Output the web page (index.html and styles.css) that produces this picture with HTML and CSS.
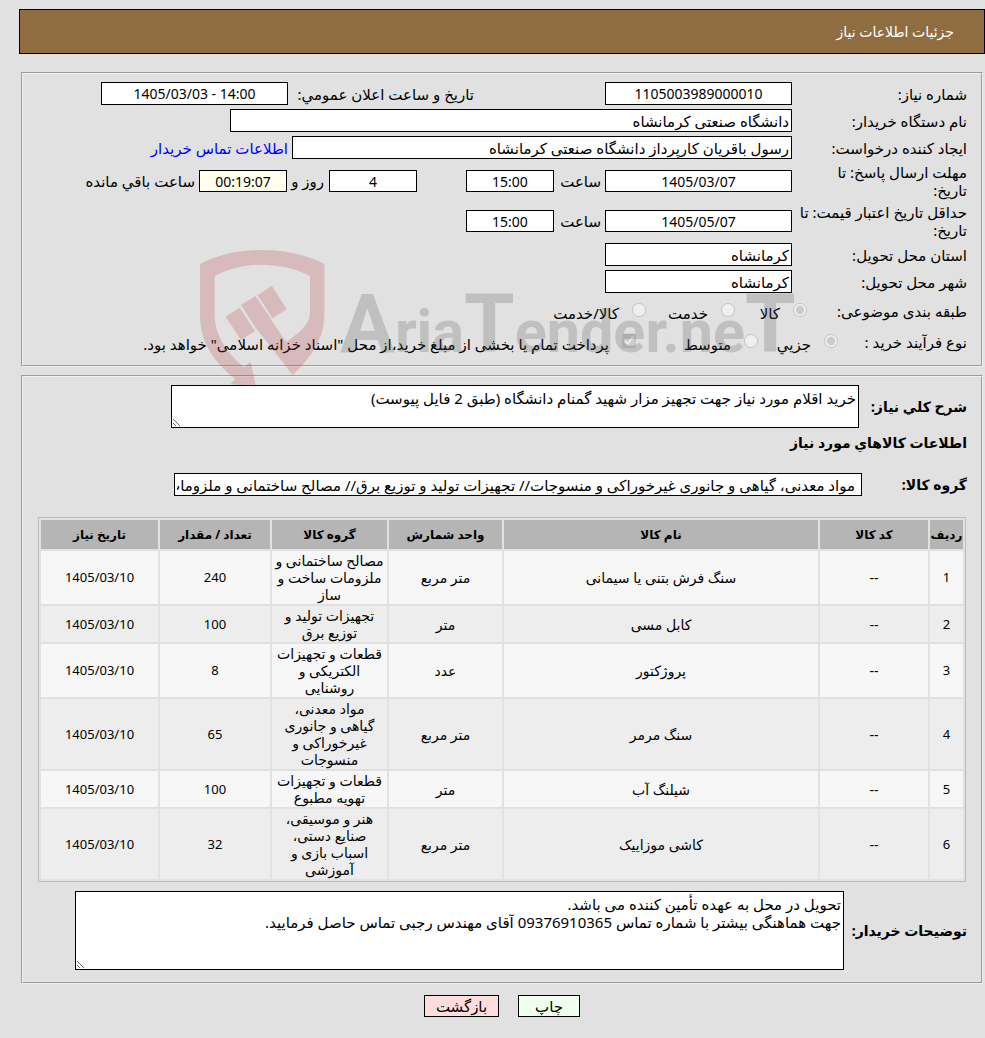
FILE: index.html
```html
<!DOCTYPE html>
<html lang="fa" dir="rtl">
<head>
    <meta charset="UTF-8">
    <meta name="viewport" content="width=device-width, initial-scale=1.0">
    <title>جزئیات اطلاعات نیاز</title>
    <link rel="stylesheet" href="styles.css">
</head>
<body>
    <div class="page">
        <h1 class="titleBar">جزئیات اطلاعات نیاز</h1>

        <fieldset class="box info">
            <div class="row">
                <label class="rowLabel" for="needNo">شماره نیاز:</label>
                <input class="field date" type="text" id="needNo" value="1105003989000010" readonly>
                <label class="announceLabel" for="announce">تاریخ و ساعت اعلان عمومي:</label>
                <input class="field date" type="text" id="announce" value="1405/03/03 - 14:00" dir="ltr" readonly>
            </div>
            <div class="row">
                <label class="rowLabel" for="buyer">نام دستگاه خریدار:</label>
                <input class="field buyer" type="text" id="buyer" value="دانشگاه صنعتی کرمانشاه" readonly>
            </div>
            <div class="row">
                <label class="rowLabel" for="creator">ایجاد کننده درخواست:</label>
                <input class="field creator" type="text" id="creator" value="رسول باقریان کارپرداز دانشگاه صنعتی کرمانشاه" readonly>
                <a class="contact" href="#contact">اطلاعات تماس خریدار</a>
            </div>
            <div class="row double">
                <label class="rowLabel" for="replyDate">مهلت ارسال پاسخ: تا<br>تاریخ:</label>
                <input class="field date" type="text" id="replyDate" value="1405/03/07" dir="ltr" readonly>
                <label class="hourLabel" for="replyHour">ساعت</label>
                <input class="field hour" type="text" id="replyHour" value="15:00" readonly>
                <input class="field hour days" type="text" id="daysLeft" value="4" readonly>
                <label class="daysLabel" for="daysLeft">روز و</label>
                <input class="field hour countdown" type="text" id="timeLeft" value="00:19:07" readonly>
                <label class="leftLabel" for="timeLeft">ساعت باقي مانده</label>
            </div>
            <div class="row double">
                <label class="rowLabel" for="priceDate">حداقل تاریخ اعتبار قیمت: تا<br>تاریخ:</label>
                <input class="field date" type="text" id="priceDate" value="1405/05/07" dir="ltr" readonly>
                <label class="hourLabel" for="priceHour">ساعت</label>
                <input class="field hour" type="text" id="priceHour" value="15:00" readonly>
            </div>
            <div class="row">
                <label class="rowLabel" for="province">استان محل تحویل:</label>
                <input class="field place" type="text" id="province" value="کرمانشاه" readonly>
            </div>
            <div class="row">
                <label class="rowLabel" for="city">شهر محل تحویل:</label>
                <input class="field place" type="text" id="city" value="کرمانشاه" readonly>
            </div>
            <div class="row choices">
                <span class="choiceTitle subject">طبقه بندی موضوعی:</span>
                <label class="choice goods"><input type="radio" name="subject" checked disabled>کالا</label>
                <label class="choice service"><input type="radio" name="subject" disabled>خدمت</label>
                <label class="choice"><input type="radio" name="subject" disabled>کالا/خدمت</label>
            </div>
            <div class="row choices">
                <span class="choiceTitle process">نوع فرآیند خرید :</span>
                <label class="choice small"><input type="radio" name="process" checked disabled>جزیي</label>
                <label class="choice medium"><input type="radio" name="process" disabled>متوسط</label>
                <label class="choice"><input type="checkbox" checked disabled>پرداخت تمام یا بخشی از مبلغ خرید،از محل "اسناد خزانه اسلامی" خواهد بود.</label>
            </div>
        </fieldset>

        <fieldset class="box goodsBox">
            <div class="row">
                <label class="boldLabel" for="desc">شرح کلي نیاز:</label>
                <textarea class="area desc" id="desc" readonly>خرید اقلام مورد نیاز جهت تجهیز مزار شهید گمنام دانشگاه (طبق 2 فایل پیوست)</textarea>
            </div>
            <h2 class="subTitle">اطلاعات کالاهاي مورد نیاز</h2>
            <div class="row">
                <label class="boldLabel groupLabel" for="group">گروه کالا:</label>
                <input class="field group" type="text" id="group" value="مواد معدنی، گیاهی و جانوری غیرخوراکی و منسوجات// تجهیزات تولید و توزیع برق// مصالح ساختمانی و ملزومات ساخت و ساز" readonly>
            </div>

            <table class="goodsTable">
                <colgroup>
                    <col class="colRow">
                    <col class="colCode">
                    <col>
                    <col class="colUnit">
                    <col class="colGroup">
                    <col class="colCount">
                    <col class="colDate">
                </colgroup>
                <thead>
                    <tr>
                        <th>ردیف</th>
                        <th>کد کالا</th>
                        <th>نام کالا</th>
                        <th>واحد شمارش</th>
                        <th>گروه کالا</th>
                        <th>تعداد / مقدار</th>
                        <th>تاریخ نیاز</th>
                    </tr>
                </thead>
                <tbody>
                    <tr>
                        <td class="num">1</td>
                        <td>--</td>
                        <td>سنگ فرش بتنی یا سیمانی</td>
                        <td>متر مربع</td>
                        <td>مصالح ساختمانی و<br>ملزومات ساخت و<br>ساز</td>
                        <td class="num">240</td>
                        <td class="num" dir="ltr">1405/03/10</td>
                    </tr>
                    <tr>
                        <td class="num">2</td>
                        <td>--</td>
                        <td>کابل مسی</td>
                        <td>متر</td>
                        <td>تجهیزات تولید و<br>توزیع برق</td>
                        <td class="num">100</td>
                        <td class="num" dir="ltr">1405/03/10</td>
                    </tr>
                    <tr>
                        <td class="num">3</td>
                        <td>--</td>
                        <td>پروژکتور</td>
                        <td>عدد</td>
                        <td>قطعات و تجهیزات<br>الکتریکی و<br>روشنایی</td>
                        <td class="num">8</td>
                        <td class="num" dir="ltr">1405/03/10</td>
                    </tr>
                    <tr>
                        <td class="num">4</td>
                        <td>--</td>
                        <td>سنگ مرمر</td>
                        <td>متر مربع</td>
                        <td>مواد معدنی،<br>گیاهی و جانوری<br>غیرخوراکی و<br>منسوجات</td>
                        <td class="num">65</td>
                        <td class="num" dir="ltr">1405/03/10</td>
                    </tr>
                    <tr>
                        <td class="num">5</td>
                        <td>--</td>
                        <td>شیلنگ آب</td>
                        <td>متر</td>
                        <td>قطعات و تجهیزات<br>تهویه مطبوع</td>
                        <td class="num">100</td>
                        <td class="num" dir="ltr">1405/03/10</td>
                    </tr>
                    <tr>
                        <td class="num">6</td>
                        <td>--</td>
                        <td>کاشی موزاییک</td>
                        <td>متر مربع</td>
                        <td>هنر و موسیقی،<br>صنایع دستی،<br>اسباب بازی و<br>آموزشی</td>
                        <td class="num">32</td>
                        <td class="num" dir="ltr">1405/03/10</td>
                    </tr>
                </tbody>
            </table>

            <div class="row">
                <label class="boldLabel notesLabel" for="notes">توضیحات خریدار:</label>
                <textarea class="area notes" id="notes" readonly>تحویل در محل به عهده تأمین کننده می باشد.
جهت هماهنگی بیشتر با شماره تماس 09376910365 آقای مهندس رجبی تماس حاصل فرمایید.</textarea>
            </div>
        </fieldset>

        <div class="buttons">
            <button class="btn print" type="button">چاپ</button>
            <button class="btn back" type="button">بازگشت</button>
        </div>

        <svg class="watermark" viewBox="270 60 1845 414" direction="ltr" aria-hidden="true">
            <g fill="#b8323a">
                <path d="M270 102Q350 60 456 60T643 102V255C643 330 600 385 548 435L440 296L454 282L442 268L484 270L528 336Q600 290 600 250V137Q530 104 456 104T314 137V255C314 320 355 372 402 412L422 395L438 470L362 462L375 446C310 395 270 335 270 255Z"/>
                <path d="M347 260L389 233L435 303L393 330Z"/>
                <path d="M393 225L436 198L484 268L440 298Z"/>
                <path d="M443 196L485 167L530 237L488 265Z"/>
            </g>
            <text class="markText" x="690" y="365"><tspan class="markTall">A</tspan>ria<tspan class="markTall">T</tspan>ender.ne<tspan class="markTall">T</tspan></text>
        </svg>
    </div>
</body>
</html>
```
FILE: styles.css
```css
* {
    box-sizing: border-box;
}
body {
    margin: 0;
    background: #e1e1e1;
    color: #000;
    font-family: "Noto Sans", "DejaVu Sans", sans-serif;
    font-size: 15px;
    line-height: 18px;
}
input, textarea, button {
    font: inherit;
    color: inherit;
}
.page {
    position: relative;
    margin-left: 19px;
    padding-top: 9px;
}
.titleBar {
    margin: 0 0 18px;
    padding: 13px 30px 12px;
    border: 1px solid #000;
    background: #8f6d40;
    color: #fff;
    font-size: 14px;
    font-weight: normal;
}
.box {
    min-width: 0;
    margin: 0 2px 8px;
    padding: 8px 14px;
    border: 2px groove #f0f0f0;
}
.info {
    display: flex;
    flex-direction: column;
    gap: 4px;
    padding-bottom: 10px;
}
.goodsBox {
    padding-bottom: 12px;
}
.row {
    display: flex;
    align-items: center;
    white-space: nowrap;
}
.double {
    height: 36px;
}
.rowLabel {
    flex: none;
    width: 175px;
}
.field {
    height: 23px;
    padding: 0 2px;
    border: 1px solid #000;
    border-radius: 0;
    background: #fff;
}
.date {
    width: 187px;
    font-size: 14px;
    text-align: center;
}
.hour {
    width: 88px;
    font-size: 14px;
    text-align: center;
}
.double .field {
    height: 22px;
}
.place {
    width: 187px;
}
.buyer {
    width: 562px;
}
.creator {
    width: 500px;
}
.announceLabel {
    width: 186px;
    margin-right: 131px;
}
.contact {
    margin-right: 4px;
    color: #00f;
    text-decoration: none;
}
.hourLabel {
    width: 51px;
    padding-right: 4px;
}
.days {
    margin-right: 49px;
}
.daysLabel {
    width: 42px;
    padding-right: 5px;
}
.countdown {
    background: #ffffee;
}
.leftLabel {
    padding-right: 4px;
}
.choices {
    height: 27px;
}
.choiceTitle {
    flex: none;
}
.subject {
    width: 160px;
}
.process {
    width: 129px;
}
.choice {
    display: flex;
    align-items: center;
    padding-top: 4px;
}
.choice input {
    width: 14px;
    height: 14px;
    margin: 0 0 6px 13px;
}
.goods {
    width: 72px;
}
.service {
    width: 89px;
}
.small {
    width: 80px;
}
.medium {
    width: 122px;
}
.boldLabel {
    flex: none;
    width: 108px;
    font-size: 14px;
    font-weight: bold;
}
.groupLabel {
    width: 105px;
}
.notesLabel {
    width: 123px;
}
.area {
    padding: 3px 2px;
    border: 1px solid #000;
    border-radius: 0;
    background: #fff;
}
.desc {
    width: 688px;
    height: 43px;
}
.group {
    width: 688px;
    padding: 0 6px 0 2px;
}
.notes {
    width: 769px;
    height: 79px;
}
.subTitle {
    margin: 6px 0 21px;
    font-size: 14px;
    line-height: 18px;
}
.goodsTable {
    width: calc(100% - 2px);
    margin: 21px 1px 9px;
    border: 1px solid #bdbdbd;
    border-spacing: 2px;
    table-layout: fixed;
    font-size: 14px;
    line-height: 17px;
}
.goodsTable th, .goodsTable td {
    padding: 1px 0;
    text-align: center;
    white-space: nowrap;
}
.goodsTable th {
    height: 29px;
    background: #b5b5b5;
    font-size: 12px;
}
.goodsTable td {
    background: #f7f7f7;
}
.goodsTable tr:nth-child(even) td {
    background: #ededed;
}
.goodsTable .num {
    font-size: 13px;
}
.colRow {
    width: 33px;
}
.colCode {
    width: 108px;
}
.colUnit {
    width: 113px;
}
.colGroup {
    width: 115px;
}
.colCount {
    width: 110px;
}
.colDate {
    width: 117px;
}
.buttons {
    display: flex;
    justify-content: center;
    gap: 19px;
    padding: 3px 0 22px;
}
.btn {
    height: 22px;
    padding: 0;
    border: 1px solid #000;
    cursor: pointer;
}
.print {
    width: 62px;
    background: #eeffee;
}
.back {
    width: 75px;
    background: #ffdddd;
}
/* logo laid over the form */
.watermark {
    position: absolute;
    top: 250px;
    left: 181px;
    width: 615px;
    height: 138px;
    opacity: 0.22;
    pointer-events: none;
}
.markText {
    fill: #505050;
    direction: ltr;
    font-family: Roboto, sans-serif;
    font-size: 178px;
    font-weight: bold;
}
.markTall {
    font-size: 245px;
}
```
